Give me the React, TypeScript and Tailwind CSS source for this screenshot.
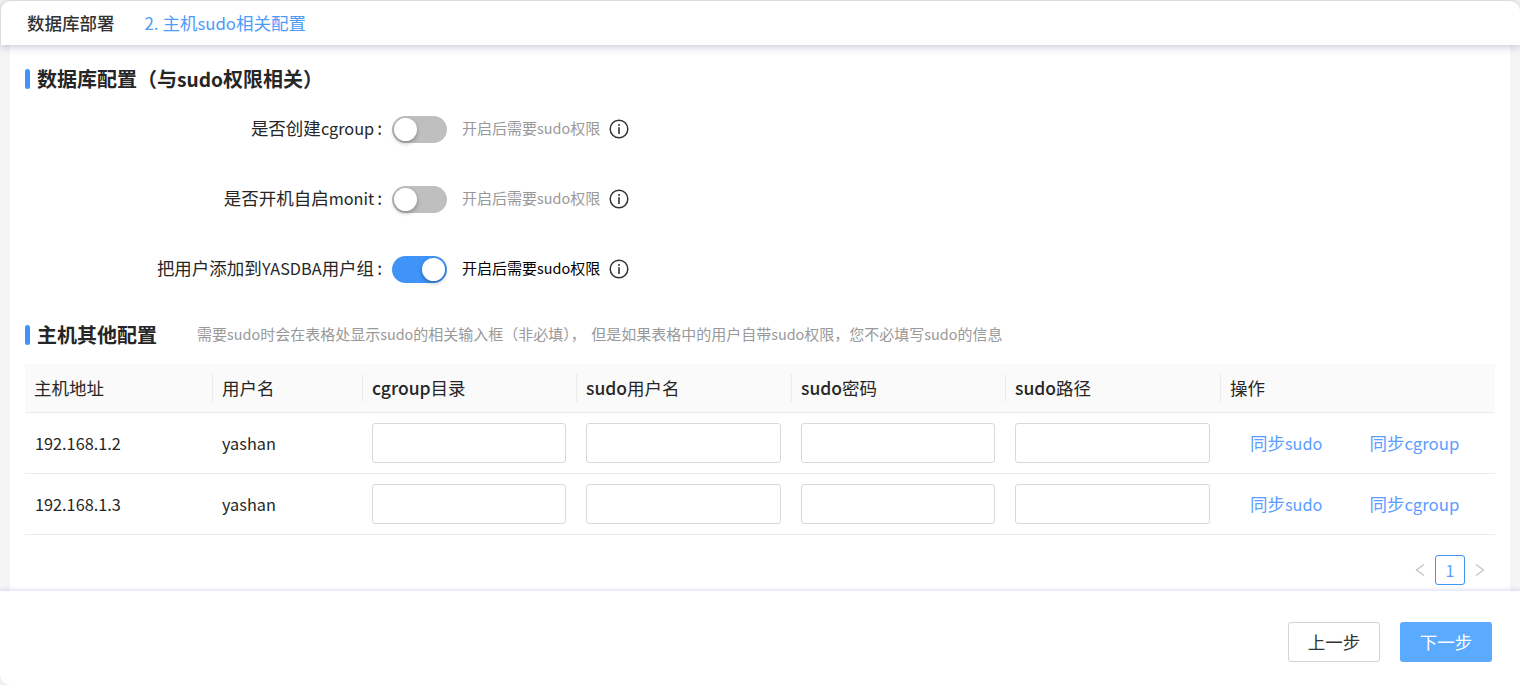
const font = 'font-["Noto_Sans_CJK_SC","Noto_Sans",sans-serif]';

// latin runs sit a bit smaller than the cjk around them in the reference
function Mixed({ text, cls = 'text-[0.93em]' }: { text: string; cls?: string }) {
  return (
    <>
      {text.split(/([A-Za-z0-9.]+)/).map((part, i) =>
        i % 2 ? <span key={i} className={cls}>{part}</span> : part
      )}
    </>
  );
}

function InfoIcon() {
  return (
    <svg width="20" height="20" viewBox="0 0 20 20" fill="none" className="shrink-0">
      <circle cx="10" cy="10" r="8.8" stroke="#333" strokeWidth="1.5" />
      <rect x="9.2" y="5" width="1.6" height="1.9" fill="#333" />
      <rect x="9.2" y="8.2" width="1.6" height="6.8" fill="#333" />
    </svg>
  );
}

function Toggle({ on }: { on?: boolean }) {
  return (
    <div className={`relative h-[27px] w-[55px] shrink-0 rounded-full ${on ? 'bg-[#4094f7]' : 'bg-[#bfbfbf]'}`}>
      <div className={`absolute top-[2px] h-[23px] w-[23px] rounded-full bg-white shadow-[0_2px_4px_rgba(0,0,0,0.3)] ${on ? 'right-[2px]' : 'left-[2px]'}`} />
    </div>
  );
}

function SwitchRow({ label, on }: { label: string; on?: boolean }) {
  return (
    <div className="flex h-[27px] items-center">
      <div className="w-[367px] pb-[2px] text-right text-[17.5px] text-[#262626]"><Mixed text={label} /><span className="ml-[3px] mr-[10px]">:</span></div>
      <Toggle on={on} />
      <div className={`ml-[15px] pb-[2px] text-[15px] ${on ? 'text-black' : 'text-[#999]'}`}><Mixed text="开启后需要sudo权限" cls="text-[0.96em]" /></div>
      <div className="ml-[9px] mb-[1px]"><InfoIcon /></div>
    </div>
  );
}

function SectionTitle({ children }: { children: React.ReactNode }) {
  return (
    <div className="flex items-center gap-[7px] text-[20px] font-bold leading-[28px] text-[#262626]">
      <div className="h-[20px] w-[5px] rounded-[3px] bg-[#4094f7]" />
      <div>{children}</div>
    </div>
  );
}

const cols = 'grid grid-cols-[187px_150px_214px_215px_214px_215px_275px]';
const heads = ['主机地址', '用户名', 'cgroup目录', 'sudo用户名', 'sudo密码', 'sudo路径', '操作'];
const hosts = ['192.168.1.2', '192.168.1.3'];

function HostRow({ ip }: { ip: string }) {
  return (
    <div className={`${cols} h-[61px] items-center border-b border-[#ebebeb] text-[17.5px] text-[#262626]`}>
      <div className="px-[10px]"><Mixed text={ip} /></div>
      <div className="px-[10px]"><Mixed text="yashan" /></div>
      {[0, 1, 2, 3].map(i => (
        <div key={i} className="px-[10px]">
          <div className="h-[40px] rounded-[3px] border border-[#d9d9d9] bg-white" />
        </div>
      ))}
      <div className="flex gap-[47px] pl-[30px] text-[#5c9dff]">
        <span><Mixed text="同步sudo" /></span>
        <span><Mixed text="同步cgroup" cls="text-[0.96em]" /></span>
      </div>
    </div>
  );
}

export default function App() {
  return (
    <div className={`flex h-[685px] w-[1520px] flex-col overflow-hidden bg-[#f5f5f7] ${font}`}>
      <header className="relative z-10 flex h-[45px] shrink-0 items-center rounded-t-[10px] border-t border-l border-[#dcdcdc] bg-white pl-[26px] shadow-[0_2px_8px_rgba(70,80,140,0.3)]">
        <div className="text-[17.5px] font-medium text-[#333]">数据库部署</div>
        <div className="ml-[30px] text-[17.5px] text-[#4c9cf8]"><Mixed text="2. 主机sudo相关配置" cls="text-[0.96em]" /></div>
      </header>

      <main className="mx-[10px] flex-1 overflow-hidden bg-white px-[15px] pt-[20px]">
        <SectionTitle><Mixed text="数据库配置（与sudo权限相关）" cls="text-[0.96em]" /></SectionTitle>
        <div className="mt-[23px] flex flex-col gap-[43px]">
          <SwitchRow label="是否创建cgroup" />
          <SwitchRow label="是否开机自启monit" />
          <SwitchRow label="把用户添加到YASDBA用户组" on />
        </div>

        <div className="mt-[38px] flex items-center">
          <SectionTitle>主机其他配置</SectionTitle>
          <div className="ml-[40px] pb-[2px] text-[15px] text-[#999]">
            <Mixed text="需要sudo时会在表格处显示sudo的相关输入框（非必填）， " cls="text-[0.96em]" />
            <span className="ml-[2px]"><Mixed text="但是如果表格中的用户自带sudo权限，您不必填写sudo的信息" cls="text-[0.96em]" /></span>
          </div>
        </div>

        <div className="mt-[15px]">
          <div className={`${cols} h-[49px] items-center border-b border-[#ebebeb] bg-[#fafafa] text-[17.5px] text-[#262626]`}>
            {heads.map((h, i) => (
              <div key={h} className={`flex h-[28px] items-center pl-[9px] ${i > 0 ? 'border-l border-[#ebebeb]' : ''}`}><span><Mixed text={h} cls="font-medium" /></span></div>
            ))}
          </div>
          {hosts.map(ip => <HostRow key={ip} ip={ip} />)}
        </div>

        <div className="mt-[20px] flex items-center justify-end gap-[9px] pr-[9px] text-[#c4c4c4]">
          <svg width="12" height="14" viewBox="0 0 12 14" fill="none"><path d="M10 1.5 2.5 7 10 12.5" stroke="currentColor" strokeWidth="1.3" /></svg>
          <div className="flex h-[30px] w-[30px] items-center justify-center rounded-[3px] border border-[#4094f7] text-[16px] text-[#5c9dff]">1</div>
          <svg width="12" height="14" viewBox="0 0 12 14" fill="none"><path d="M2 1.5 9.5 7 2 12.5" stroke="currentColor" strokeWidth="1.3" /></svg>
        </div>
      </main>

      <footer className="relative z-10 flex h-[94px] shrink-0 items-start justify-end gap-[20px] rounded-bl-[10px] bg-white pt-[31px] pr-[28px] shadow-[0_-1px_4px_rgba(70,80,200,0.2)]">
        <button className="h-[40px] w-[92px] rounded-[3px] border border-[#d4d4d4] bg-white text-[17.5px] text-[#333]">上一步</button>
        <button className="h-[40px] w-[92px] rounded-[3px] bg-[#5aabff] text-[17.5px] text-white">下一步</button>
      </footer>
    </div>
  );
}
